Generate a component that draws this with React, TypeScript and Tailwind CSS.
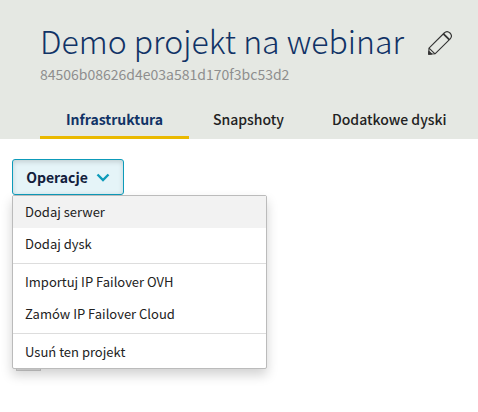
import React from "react";

const tabs = ["Infrastruktura", "Snapshoty", "Dodatkowe dyski"];

const groups = [
  ["Dodaj serwer", "Dodaj dysk"],
  ["Importuj IP Failover OVH", "Zamów IP Failover Cloud"],
  ["Usuń ten projekt"],
];

function PencilIcon() {
  return (
    <svg width="24" height="24" viewBox="0 0 24 24" fill="none" stroke="#333" strokeWidth="1.1" strokeLinejoin="round">
      <path d="M.7 23.3L1 17.2L16.2 2C17.8 .4 20.2 .4 22 2C23.7 3.8 23.7 6.2 22.2 7.8L7 22.8Z" />
      <path d="M1 17.2L7 22.8" />
      <path d="M15.4 2.8L21.3 8.7" strokeWidth="1.8" />
      <path d="M.7 23.3L.9 20.4L3.6 23Z" fill="#333" />
    </svg>
  );
}

export default function App() {
  return (
    <div className="min-h-screen bg-white font-['Noto_Sans_CJK_SC',sans-serif] text-[#222]">
      <header className="bg-[#e5e8e3] pl-10 pt-[18px]">
        <div className="flex items-end gap-6">
          <h1 className="whitespace-nowrap text-[32px] font-light leading-[44px] text-[#113366]">
            Demo projekt na webinar
          </h1>
          <button type="button" aria-label="Edytuj nazwę" className="pb-[7px]">
            <PencilIcon />
          </button>
        </div>
        <p className="mt-0.5 text-[14px] font-normal leading-5 text-[#8e8e8e]">84506b08626d4e03a581d170f3bc53d2</p>
        <nav className="mt-4 flex">
          {tabs.map((tab, i) => (
            <a
              key={tab}
              href="#"
              className={
                i === 0
                  ? "min-w-[149px] whitespace-nowrap border-b-3 border-[#eab900] px-6 pb-[5px] pt-[7px] text-center text-[14px] font-bold leading-6 text-[#113366]"
                  : "whitespace-nowrap border-b-3 border-transparent px-6 pb-[5px] pt-[7px] text-[14px] font-medium leading-6"
              }
            >
              {tab}
            </a>
          ))}
        </nav>
      </header>
      <main className="px-3 pt-5">
        <div className="relative w-fit">
          <button
            type="button"
            aria-haspopup="menu"
            aria-expanded="true"
            className="flex h-9 w-28 items-center justify-center gap-2 rounded-[3px] border border-[#0d9bba] bg-[#e5f4f8] text-[14px] font-bold text-[#12203c] shadow-[inset_0_2px_5px_rgba(0,0,0,0.15)]"
          >
            Operacje
            <svg width="14" height="10" viewBox="0 0 14 10" fill="none" stroke="#0d9bba" strokeWidth="2.4">
              <path d="M1.5 2.5L7 8L12.5 2.5" />
            </svg>
          </button>
          <div
            role="menu"
            className="absolute left-0 top-full z-10 w-[255px] rounded-[2px] border border-[#bbb] bg-white shadow-[0_6px_12px_rgba(0,0,0,0.18)]"
          >
            {groups.map((group, g) => (
              <div key={group[0]} role="group">
                {g > 0 && <hr className="mb-0.5 mt-[3px] border-[#ddd]" />}
                {group.map((item, i) => (
                  <button
                    key={item}
                    type="button"
                    role="menuitem"
                    className={
                      g === 0 && i === 0
                        ? "block h-8 w-full bg-[#f2f2f2] px-3 text-left text-[13px] leading-8"
                        : "block h-8 w-full px-3 text-left text-[13px] leading-8"
                    }
                  >
                    {item}
                  </button>
                ))}
              </div>
            ))}
          </div>
        </div>
        <div className="ml-1 mt-38 h-6 w-[25px] border border-[#ccc] bg-[#e4e4e4]" />
      </main>
    </div>
  );
}
